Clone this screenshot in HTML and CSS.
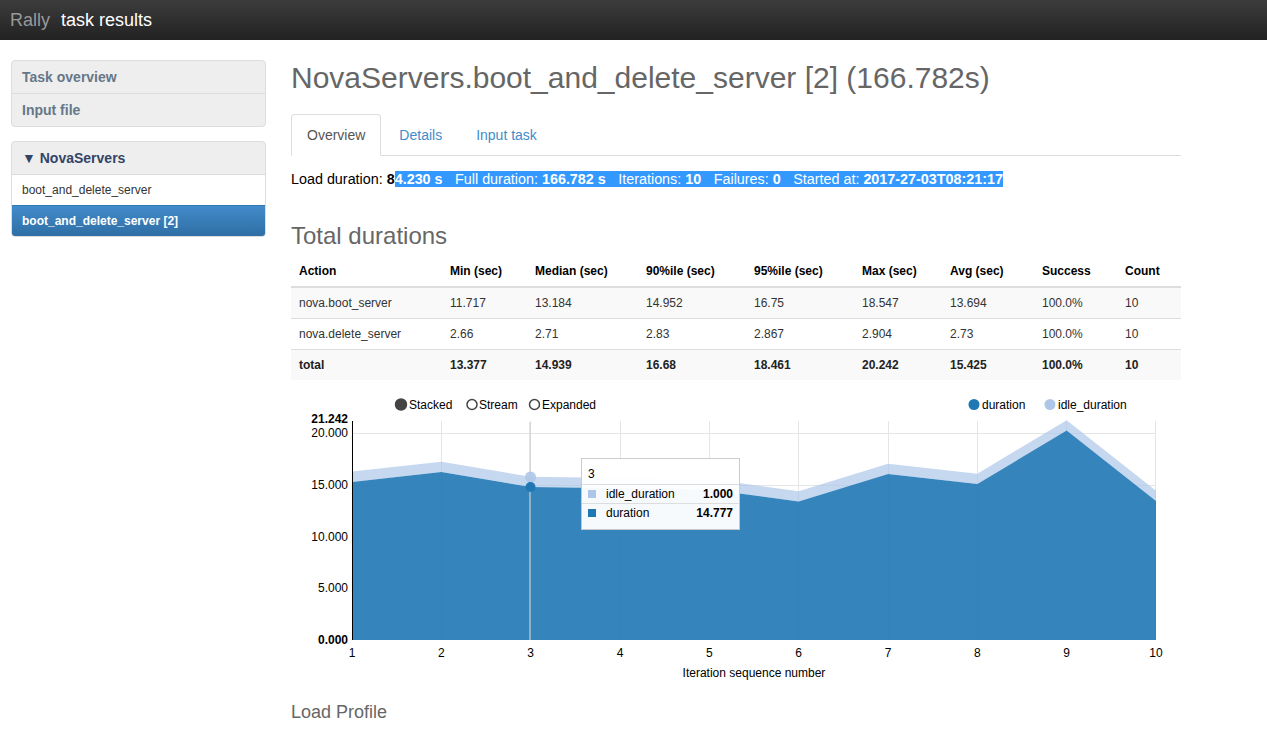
FILE: index.html
```html
<!DOCTYPE html>
<html>
<head>
<meta charset="utf-8">
<title>Rally | task results</title>
<link rel="stylesheet" href="styles.css">
</head>
<body>
<div class="header">
  <a class="brand" href="#">Rally</a><span class="title">task results</span>
</div>
<div class="page">
  <div class="aside">
    <div class="navcls">
      <div class="navcls-item-top">Task overview</div>
      <div class="navcls-item-top sep">Input file</div>
    </div>
    <div class="navcls">
      <div class="navcls-head">&#9660; NovaServers</div>
      <div class="navcls-item">boot_and_delete_server</div>
      <div class="navcls-item active">boot_and_delete_server [2]</div>
    </div>
  </div>
  <div class="main">
    <h1 class="scn-title">NovaServers.boot_and_delete_server [2] (166.782s)</h1>
    <ul class="tabs">
      <li class="tab active">Overview</li>
      <li class="tab">Details</li>
      <li class="tab">Input task</li>
    </ul>
    <div class="summary">Load duration: <b>8</b><span class="sel"><b>4.230 s</b><span class="gap"></span>Full duration: <b>166.782 s</b><span class="gap"></span>Iterations: <b>10</b><span class="gap"></span>Failures: <b>0</b><span class="gap"></span>Started at: <b>2017-27-03T08:21:17</b></span></div>

    <h2 class="section">Total durations</h2>
    <table class="stats">
      <colgroup>
        <col class="c1"><col class="c2"><col class="c3"><col class="c4"><col class="c5"><col class="c6"><col class="c7"><col class="c8"><col class="c9">
      </colgroup>
      <thead>
        <tr><th>Action</th><th>Min (sec)</th><th>Median (sec)</th><th>90%ile (sec)</th><th>95%ile (sec)</th><th>Max (sec)</th><th>Avg (sec)</th><th>Success</th><th>Count</th></tr>
      </thead>
      <tbody>
        <tr><td>nova.boot_server</td><td>11.717</td><td>13.184</td><td>14.952</td><td>16.75</td><td>18.547</td><td>13.694</td><td>100.0%</td><td>10</td></tr>
        <tr><td>nova.delete_server</td><td>2.66</td><td>2.71</td><td>2.83</td><td>2.867</td><td>2.904</td><td>2.73</td><td>100.0%</td><td>10</td></tr>
        <tr class="total"><td>total</td><td>13.377</td><td>14.939</td><td>16.68</td><td>18.461</td><td>20.242</td><td>15.425</td><td>100.0%</td><td>10</td></tr>
      </tbody>
    </table>

    <div class="chart">
      <svg width="890" height="295" viewBox="0 0 890 295" xmlns="http://www.w3.org/2000/svg">
        <g class="legend" font-family="Liberation Sans, Arial, sans-serif" font-size="12" fill="#000">
          <circle cx="110" cy="13.5" r="5.5" fill="#444" stroke="#444" stroke-width="1.5"/>
          <text x="118" y="18">Stacked</text>
          <circle cx="181" cy="13.5" r="5" fill="#fff" stroke="#444" stroke-width="1.5"/>
          <text x="188" y="18">Stream</text>
          <circle cx="243.5" cy="13.5" r="5" fill="#fff" stroke="#444" stroke-width="1.5"/>
          <text x="251" y="18">Expanded</text>
          <circle cx="683" cy="13.5" r="5.5" fill="#1f77b4"/>
          <text x="691" y="18">duration</text>
          <circle cx="759" cy="13.5" r="5.5" fill="#aec7e8"/>
          <text x="767" y="18">idle_duration</text>
        </g>
        <g stroke="#e5e5e5" stroke-width="1">
          <line x1="61" y1="42.5" x2="865" y2="42.5"/>
          <line x1="61" y1="94.5" x2="865" y2="94.5"/>
          <line x1="61" y1="146.5" x2="865" y2="146.5"/>
          <line x1="61" y1="197.5" x2="865" y2="197.5"/>
          <line x1="150.5" y1="30" x2="150.5" y2="249"/>
          <line x1="239.5" y1="30" x2="239.5" y2="249"/>
          <line x1="329.5" y1="30" x2="329.5" y2="249"/>
          <line x1="418.5" y1="30" x2="418.5" y2="249"/>
          <line x1="507.5" y1="30" x2="507.5" y2="249"/>
          <line x1="597.5" y1="30" x2="597.5" y2="249"/>
          <line x1="686.5" y1="30" x2="686.5" y2="249"/>
          <line x1="775.5" y1="30" x2="775.5" y2="249"/>
          <line x1="864.5" y1="30" x2="864.5" y2="249"/>
        </g>
        <path d="M61,90.96 L150.33,81.02 L239.67,96.06 L329,97.37 L418.33,98.41 L507.67,110.55 L597,82.99 L686.33,93.03 L775.67,39.5 L865,110 L865,99.65 L775.67,29.15 L686.33,82.68 L597,72.64 L507.67,100.2 L418.33,88.06 L329,87.02 L239.67,85.71 L150.33,70.67 L61,80.61 Z" fill="#aec7e8" fill-opacity="0.7"/>
        <path d="M61,249 L61,90.96 L150.33,81.02 L239.67,96.06 L329,97.37 L418.33,98.41 L507.67,110.55 L597,82.99 L686.33,93.03 L775.67,39.5 L865,110 L865,249 Z" fill="#1f77b4" fill-opacity="0.9"/>
        <line x1="239" y1="31" x2="239" y2="249" stroke="#d0d0d0" stroke-width="1.5" stroke-opacity="0.8"/>
        <circle cx="239.5" cy="86" r="5.5" fill="#aec7e8" fill-opacity="0.9"/>
        <circle cx="239.5" cy="96" r="5" fill="#1f77b4"/>
        <line x1="61.5" y1="30" x2="61.5" y2="249" stroke="#000" stroke-width="1"/>
        <g font-family="Liberation Sans, Arial, sans-serif" font-size="12" fill="#000" text-anchor="end">
          <text x="57" y="32" font-weight="bold">21.242</text>
          <text x="57" y="46">20.000</text>
          <text x="57" y="98">15.000</text>
          <text x="57" y="150">10.000</text>
          <text x="57" y="201">5.000</text>
          <text x="57" y="253" font-weight="bold">0.000</text>
        </g>
        <g font-family="Liberation Sans, Arial, sans-serif" font-size="12" fill="#000" text-anchor="middle">
          <text x="61" y="266">1</text>
          <text x="150.33" y="266">2</text>
          <text x="239.67" y="266">3</text>
          <text x="329" y="266">4</text>
          <text x="418.33" y="266">5</text>
          <text x="507.67" y="266">6</text>
          <text x="597" y="266">7</text>
          <text x="686.33" y="266">8</text>
          <text x="775.67" y="266">9</text>
          <text x="865" y="266">10</text>
          <text x="463" y="286">Iteration sequence number</text>
        </g>
      </svg>
      <div class="tooltip">
        <div class="tt-head">3</div>
        <div class="tt-row"><span class="sw light"></span><span class="tt-key">idle_duration</span><span class="tt-val">1.000</span></div>
        <div class="tt-row"><span class="sw dark"></span><span class="tt-key">duration</span><span class="tt-val">14.777</span></div>
      </div>
    </div>

    <h3 class="subsection">Load Profile</h3>
  </div>
</div>
</body>
</html>
```
FILE: styles.css
```css
html, body {
  margin: 0;
  padding: 0;
}
body {
  font-family: "Liberation Sans", Arial, Helvetica, sans-serif;
  font-size: 14px;
  color: #333;
  background: #fff;
  width: 1267px;
  overflow: hidden;
}
.header {
  height: 40px;
  box-sizing: border-box;
  padding: 0 10px;
  display: flex;
  align-items: center;
  font-size: 18px;
  color: #fff;
  background: linear-gradient(to bottom, #3c3c3c 0%, #222 100%);
}
.brand {
  color: #999;
  text-decoration: none;
  margin-right: 11px;
}
.title {
  color: #fff;
}
.page {
  display: flex;
  align-items: flex-start;
  padding: 20px 0 0 11px;
}
.aside {
  width: 255px;
  flex: 0 0 255px;
  margin-right: 25px;
}
.navcls {
  background: #eee;
  border: 1px solid #ddd;
  border-radius: 4px;
  margin-bottom: 14px;
  overflow: hidden;
  color: #678;
}
.navcls-item-top {
  padding: 8px 10px;
  line-height: 16px;
  font-weight: bold;
  font-size: 14px;
}
.navcls-item-top.sep {
  border-top: 1px solid #ddd;
}
.navcls-head {
  padding: 8px 10px;
  line-height: 16px;
  font-weight: bold;
  font-size: 14px;
  color: #346;
}
.navcls-item {
  padding: 7px 10px;
  line-height: 16px;
  font-size: 12px;
  background: #fff;
  color: #333;
  border-top: 1px solid #ddd;
}
.navcls-item.active {
  color: #fff;
  font-weight: bold;
  border-top-color: #3278b3;
  background: linear-gradient(to bottom, #428bca 0%, #2f6ea5 100%);
}
.main {
  width: 890px;
  flex: 0 0 890px;
}
.scn-title {
  margin: 0;
  font-size: 30px;
  line-height: 36px;
  font-weight: normal;
  color: #666;
}
.tabs {
  list-style: none;
  margin: 18px 0 0;
  padding: 0;
  display: flex;
  border-bottom: 1px solid #ddd;
}
.tab {
  padding: 10px 15px;
  line-height: 20px;
  margin-right: 2px;
  margin-bottom: -1px;
  border: 1px solid transparent;
  border-radius: 4px 4px 0 0;
  color: #428bca;
}
.tab.active {
  color: #555;
  background: #fff;
  border-color: #ddd #ddd transparent;
}
.summary {
  margin-top: 15px;
  line-height: 16px;
  font-size: 14.35px;
  color: #000;
}
.summary b {
  font-weight: bold;
}
.sel {
  background: #3399ff;
  color: #fff;
}
.gap {
  display: inline-block;
  width: 12.5px;
}
.section {
  margin: 35px 0 6px;
  font-size: 24px;
  line-height: 28px;
  font-weight: normal;
  color: #666;
}
.stats {
  width: 890px;
  table-layout: fixed;
  border-collapse: collapse;
  font-size: 12px;
  color: #333;
}
.c1 { width: 151px; }
.c2 { width: 85px; }
.c3 { width: 111px; }
.c4 { width: 108px; }
.c5 { width: 108px; }
.c6 { width: 88px; }
.c7 { width: 92px; }
.c8 { width: 83px; }
.c9 { width: 64px; }
.stats th {
  text-align: left;
  font-weight: bold;
  color: #000;
  padding: 7px 8px 7px;
  line-height: 16px;
  border-bottom: 2px solid #ddd;
}
.stats td {
  padding: 7px 8px;
  line-height: 16px;
  border-top: 1px solid #ddd;
}
.stats tbody tr:nth-child(odd) td {
  background: #f9f9f9;
}
.stats tr.total td {
  font-weight: bold;
  color: #222;
}
.chart {
  position: relative;
  margin-top: 11px;
  width: 890px;
  height: 295px;
}
.chart svg {
  display: block;
}
.tooltip {
  position: absolute;
  left: 290px;
  top: 67px;
  width: 157px;
  padding-bottom: 7px;
  background: rgba(255, 255, 255, 0.96);
  border: 1px solid rgba(0, 0, 0, 0.2);
  font-size: 12px;
  color: #000;
}
.tt-head {
  padding: 3px 6px 0;
  line-height: 19px;
  height: 23px;
  border-bottom: 1px solid #ddd;
  box-sizing: border-box;
  margin-top: 3px;
}
.tt-row {
  display: flex;
  align-items: center;
  height: 18px;
  padding: 0 6px;
}
.tt-row + .tt-row {
  border-top: 1px solid #ddd;
}
.sw {
  width: 8px;
  height: 8px;
  margin-right: 10px;
}
.sw.light { background: #aec7e8; }
.sw.dark { background: #1f77b4; }
.tt-key {
  flex: 1;
}
.tt-val {
  font-weight: bold;
}
.subsection {
  margin: 16px 0 0;
  font-size: 18px;
  line-height: 20px;
  font-weight: normal;
  color: #666;
}
```
